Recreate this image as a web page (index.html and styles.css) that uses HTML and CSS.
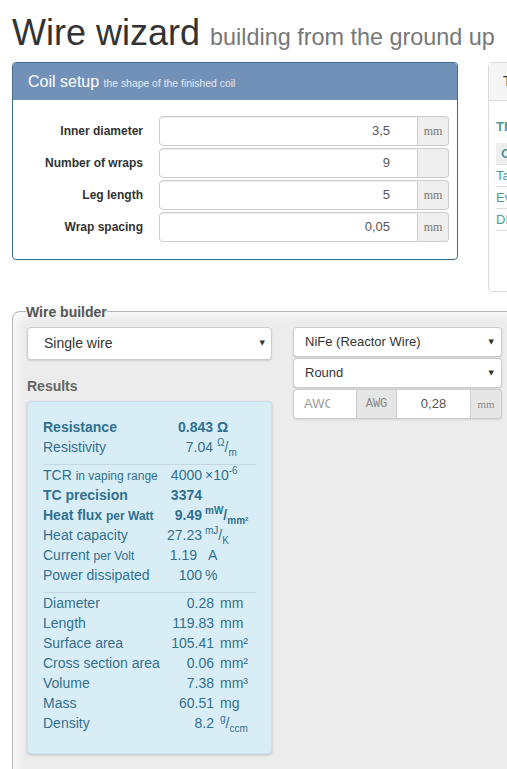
FILE: index.html
```html
<!DOCTYPE html>
<html>
<head>
<meta charset="utf-8">
<title>Wire wizard</title>
<link rel="stylesheet" href="styles.css">
</head>
<body>
<h1 class="title">Wire wizard <small>building from the ground up</small></h1>

<div class="top-row">
  <section class="coil-panel">
    <div class="coil-head">Coil setup <small>the shape of the finished coil</small></div>
    <div class="coil-body">
      <label class="lbl">Inner diameter</label>
      <div class="igroup"><div class="ifield">3,5</div><div class="addon">mm</div></div>
      <label class="lbl">Number of wraps</label>
      <div class="igroup"><div class="ifield">9</div><div class="addon"></div></div>
      <label class="lbl">Leg length</label>
      <div class="igroup"><div class="ifield">5</div><div class="addon">mm</div></div>
      <label class="lbl">Wrap spacing</label>
      <div class="igroup"><div class="ifield">0,05</div><div class="addon">mm</div></div>
    </div>
  </section>

  <section class="side-panel">
    <div class="side-head">Tables</div>
    <div class="side-body">
      <div class="side-title">TFR</div>
      <div class="side-th">Coil</div>
      <div class="side-row">Taifun</div>
      <div class="side-row">Evic</div>
      <div class="side-row">DNA</div>
    </div>
  </section>
</div>

<fieldset class="builder">
  <legend>Wire builder</legend>
  <div class="builder-cols">
    <div class="col-left">
      <div class="select big"><span>Single wire</span><span class="caret">▼</span></div>
      <h4 class="results-title">Results</h4>
      <div class="results">
        <div class="sec sec1">
          <span class="b">Resistance</span><span class="v b">0.843</span><span class="u b">Ω</span>
          <span>Resistivity</span><span class="v">7.04</span><span class="u"><sup>Ω</sup>/<sub>m</sub></span>
        </div>
        <div class="sec sec2">
          <span>TCR <small>in vaping range</small></span><span class="v">4000</span><span class="u">×10<sup>-6</sup></span>
          <span class="b">TC precision</span><span class="v b">3374</span><span class="u"></span>
          <span class="b">Heat flux <small>per Watt</small></span><span class="v b">9.49</span><span class="u b"><sup>mW</sup>/<sub>mm²</sub></span>
          <span>Heat capacity</span><span class="v">27.23</span><span class="u"><sup>mJ</sup>/<sub>K</sub></span>
          <span>Current <small>per Volt</small></span><span class="v tight">1.19</span><span class="u wide">A</span>
          <span>Power dissipated</span><span class="v">100</span><span class="u">%</span>
        </div>
        <div class="sec sec3">
          <span>Diameter</span><span class="v">0.28</span><span class="u">mm</span>
          <span>Length</span><span class="v">119.83</span><span class="u">mm</span>
          <span>Surface area</span><span class="v">105.41</span><span class="u">mm²</span>
          <span>Cross section area</span><span class="v">0.06</span><span class="u">mm²</span>
          <span>Volume</span><span class="v">7.38</span><span class="u">mm³</span>
          <span>Mass</span><span class="v">60.51</span><span class="u">mg</span>
          <span>Density</span><span class="v">8.2</span><span class="u"><sup>g</sup>/<sub>ccm</sub></span>
        </div>
      </div>
    </div>

    <div class="col-right">
      <div class="select small"><span>NiFe (Reactor Wire)</span><span class="caret">▼</span></div>
      <div class="select small"><span>Round</span><span class="caret">▼</span></div>
      <div class="agroup">
        <div class="ag-input ph"><span class="clip">AWG</span></div>
        <div class="ag-addon mono">AWG</div>
        <div class="ag-input center">0,28</div>
        <div class="ag-addon serif">mm</div>
      </div>
    </div>
  </div>
</fieldset>
</body>
</html>
```
FILE: styles.css
```css
html, body {
  margin: 0;
  padding: 0;
  overflow: hidden;
}
body {
  font-family: "Liberation Sans", Arial, sans-serif;
  color: #333;
  background: #fff;
  padding-left: 12px;
}

.title {
  font-size: 36px;
  font-weight: normal;
  line-height: 1.1;
  margin: 13px 0 9px;
  white-space: nowrap;
  color: #333;
}
.title small {
  font-size: 65%;
  color: #777;
}

.top-row {
  display: flex;
  gap: 30px;
  align-items: flex-start;
  width: 800px;
}

.coil-panel {
  flex: none;
  width: 446px;
  box-sizing: border-box;
  border: 1px solid #3f6e8c;
  border-radius: 4px;
  overflow: hidden;
  background: #fff;
  box-shadow: 0 1px 1px rgba(0,0,0,.05);
}
.coil-head {
  background: #7191b9;
  color: #fff;
  font-size: 16px;
  line-height: 19px;
  height: 19px;
  padding: 9px 15px;
  white-space: nowrap;
}
.coil-head small {
  font-size: 10.4px;
  line-height: 1;
  color: #e2e9f2;
}
.coil-body {
  display: grid;
  grid-template-columns: 130px 290px;
  column-gap: 16px;
  row-gap: 2px;
  align-items: center;
  padding: 16px 8px 17px 0;
}
.lbl {
  text-align: right;
  font-weight: bold;
  font-size: 12px;
  color: #333;
}
.igroup {
  display: flex;
  height: 30px;
}
.ifield {
  flex: 1;
  border: 1px solid #ccc;
  border-radius: 4px 0 0 4px;
  text-align: right;
  padding-right: 27px;
  font-size: 13px;
  color: #555;
  line-height: 28px;
  box-shadow: inset 0 1px 1px rgba(0,0,0,.075);
}
.addon {
  width: 31px;
  box-sizing: border-box;
  border: 1px solid #ccc;
  border-left: 0;
  border-radius: 0 4px 4px 0;
  background: #eee;
  font-family: "Liberation Serif", "Times New Roman", serif;
  font-size: 12px;
  color: #777;
  text-align: center;
  line-height: 28px;
}

.side-panel {
  flex: none;
  width: 300px;
  height: 230px;
  box-sizing: border-box;
  border: 1px solid #ddd;
  border-radius: 4px;
  background: #fff;
}
.side-head {
  background: #f5f5f5;
  border-bottom: 1px solid #ddd;
  height: 37px;
  line-height: 36px;
  padding-left: 14px;
  font-size: 14px;
  color: #333;
}
.side-body {
  padding: 16px 7px 0;
  font-size: 13px;
  color: #4c9a9a;
}
.side-title {
  font-weight: bold;
  line-height: 20px;
}
.side-th {
  margin-top: 6px;
  background: #eee;
  line-height: 21px;
  padding-left: 5px;
  color: #4c9a9a;
  font-weight: bold;
  border-bottom: 1px solid #ddd;
}
.side-row {
  line-height: 21px;
  border-bottom: 1px solid #ddd;
}

.builder {
  margin: 10px 0 0;
  padding: 5px 14px 30px;
  border: 1px solid #b5b5b5;
  border-radius: 8px 0 0 0;
  background: #ececec;
  width: 560px;
  min-width: 0;
  box-shadow: inset 8px 8px 10px -4px rgba(255,255,255,.7);
}
.builder legend {
  padding: 0;
  margin-left: -1px;
  font-size: 14px;
  line-height: 20px;
  font-weight: bold;
  color: #555;
}
.builder-cols {
  display: flex;
  gap: 21px;
  align-items: flex-start;
}
.col-left {
  width: 245px;
  flex: none;
}
.col-right {
  width: 209px;
  flex: none;
}

.select {
  display: flex;
  align-items: center;
  justify-content: space-between;
  box-sizing: border-box;
  background: #fff;
  border: 1px solid #ccc;
  border-radius: 4px;
  box-shadow: 0 1px 2px rgba(0,0,0,.12);
  color: #333;
}
.select.big {
  height: 33px;
  padding: 0 6px 0 16px;
  font-size: 14px;
}
.select.small {
  height: 30px;
  padding: 0 7px 0 11px;
  font-size: 13px;
  margin-bottom: 1px;
}
.caret {
  font-family: "DejaVu Sans", sans-serif;
  font-size: 7px;
  color: #333;
}

.agroup {
  display: flex;
  height: 30px;
  box-shadow: 0 1px 2px rgba(0,0,0,.1);
  border-radius: 4px;
}
.ag-input {
  box-sizing: border-box;
  background: #fff;
  border: 1px solid #ccc;
  font-size: 13px;
  line-height: 28px;
  color: #555;
}
.ag-input.ph {
  width: 64px;
  border-radius: 4px 0 0 4px;
  padding-left: 10px;
  color: #999;
}
.clip {
  display: inline-block;
  width: 26px;
  overflow: hidden;
  white-space: nowrap;
  vertical-align: top;
}
.ag-input.center {
  width: 74px;
  text-align: center;
  border-left: 0;
}
.ag-addon {
  box-sizing: border-box;
  background: #e6e6e6;
  border: 1px solid #ccc;
  border-left: 0;
  line-height: 28px;
  text-align: center;
  color: #888;
}
.ag-addon.mono {
  width: 40px;
  font-family: "Liberation Mono", "Courier New", monospace;
  font-size: 12px;
}
.ag-addon.serif {
  width: 31px;
  border-radius: 0 4px 4px 0;
  font-family: "Liberation Serif", "Times New Roman", serif;
  font-size: 11px;
}

.results-title {
  margin: 16px 0 5px;
  font-size: 14px;
  line-height: 20px;
  font-weight: bold;
  color: #666;
}
.results {
  background: #d9edf7;
  border: 1px solid #c7e4f0;
  border-radius: 4px;
  padding: 15px 15px 20px;
  color: #31708f;
  font-size: 14px;
  line-height: 20px;
  box-shadow: 0 1px 3px rgba(0,0,0,.2);
}
.sec {
  display: grid;
  grid-auto-rows: 20px;
  white-space: nowrap;
}
.sec > span {
  height: 20px;
  overflow: visible;
}
.sec + .sec {
  margin-top: 7px;
  border-top: 1px solid #c3d8e3;
}
.sec1 { grid-template-columns: 120px 50px auto; }
.sec2 { grid-template-columns: 118px 41px auto; }
.sec3 { grid-template-columns: 121px 50px auto; }
.sec1 .u { padding-left: 4px; }
.sec2 .u { padding-left: 3px; }
.sec3 .u { padding-left: 6px; }
.v { text-align: right; }
.v.tight { padding-right: 5px; }
.sec2 .u.wide { padding-left: 6px; }
.b { font-weight: bold; }
.sec small {
  font-size: 12px;
  line-height: 0;
}
.sec sup, .sec sub {
  font-size: 10px;
  line-height: 0;
}
```
